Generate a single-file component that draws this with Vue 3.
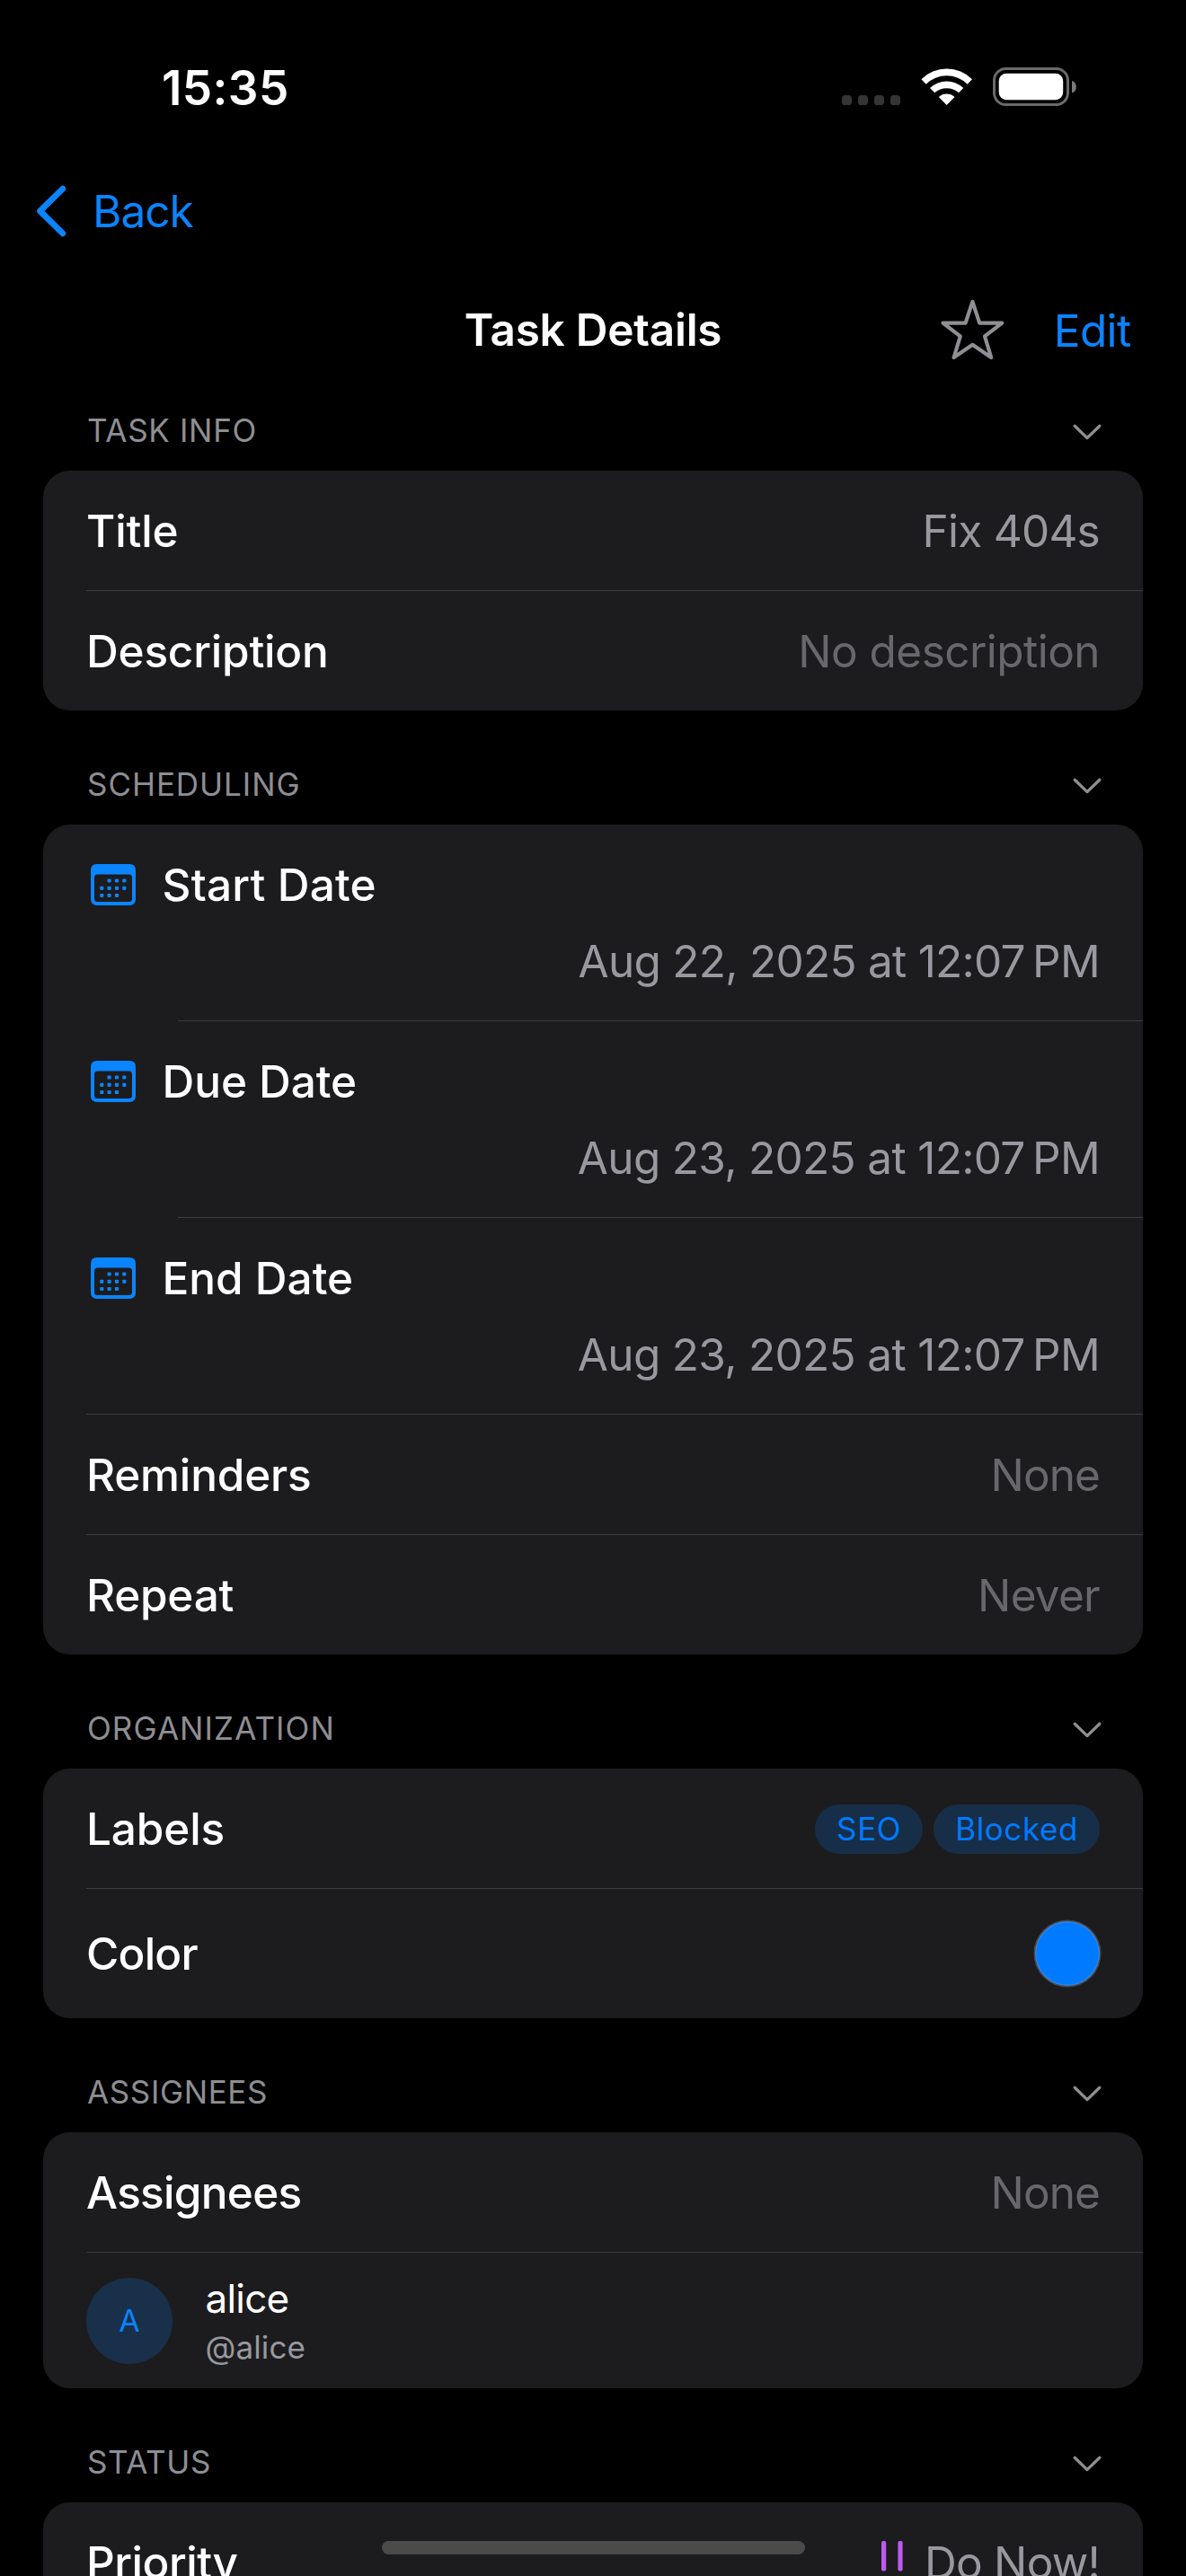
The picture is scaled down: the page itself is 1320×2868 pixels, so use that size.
<script setup>
// `track` is the letter spacing of a text in px, `vt` the one of its value.
const sections = [
  {
    name: 'TASK INFO', track: 0.69,
    rows: [
      { label: 'Title', track: -0.16, value: 'Fix 404s', vt: -0.75 },
      { label: 'Description', track: -0.21, value: 'No description', vt: -0.54, dim: true }
    ]
  },
  {
    name: 'SCHEDULING', track: 0.95,
    rows: [
      { kind: 'date', label: 'Start Date', track: 0.18, value: 'Aug 22, 2025 at 12:07\u202fPM', vt: -0.73, inset: true },
      { kind: 'date', label: 'Due Date', track: -0.05, value: 'Aug 23, 2025 at 12:07\u202fPM', vt: -0.67, inset: true },
      { kind: 'date', label: 'End Date', track: -0.02, value: 'Aug 23, 2025 at 12:07\u202fPM', vt: -0.67 },
      { label: 'Reminders', track: -0.19, value: 'None', vt: -0.9, dim: true },
      { label: 'Repeat', track: -0.25, value: 'Never', vt: -0.72, dim: true }
    ]
  },
  {
    name: 'ORGANIZATION', track: 1.09,
    rows: [
      { kind: 'tags', label: 'Labels', track: -0.15, tags: ['SEO', 'Blocked'] },
      { kind: 'color', label: 'Color', track: -0.77 }
    ]
  },
  {
    name: 'ASSIGNEES', track: 0.62,
    rows: [
      { label: 'Assignees', track: -0.72, value: 'None', vt: -0.9, dim: true },
      { kind: 'person', name: 'alice', handle: '@alice', initial: 'A' }
    ]
  },
  {
    name: 'STATUS', track: 0.62,
    rows: [{ kind: 'priority', label: 'Priority', track: -0.5, value: 'Do Now!', vt: -0.74 }]
  }
]
const dots = [
  [20.6, 18.5], [29, 18.5], [37.3, 18.5],
  [12.3, 26.8], [20.6, 26.8], [29, 26.8], [37.3, 26.8],
  [12.3, 35], [20.6, 35], [29, 35]
]
</script>

<template>
  <main class="screen">
    <header class="status-bar">
      <span class="time">15:35</span>
      <svg class="status-icons" width="261" height="43" viewBox="0 0 261 43">
        <g fill="#353535">
          <rect v-for="i in 4" :key="i" :x="(i - 1) * 18" y="31" width="11" height="11" rx="3.6" />
        </g>
        <g transform="translate(88 0)" fill="#fff">
          <path d="M.4 13.3A40 40 0 0 1 57 13.3L51.7 18.7A33 33 0 0 0 5.7 18.7Z" />
          <path d="M10 23A27 27 0 0 1 47.3 23L42 28.3A20 20 0 0 0 15.3 28.3Z" />
          <path d="M19.8 32.9A13 13 0 0 1 37.5 32.9L28.65 42Z" />
        </g>
        <rect x="169.5" y="1.5" width="82" height="40" rx="13" fill="none" stroke="#6a6a6a" stroke-width="3" />
        <rect x="174.7" y="6.7" width="71.5" height="29.5" rx="8.5" fill="#fff" />
        <path d="M256 15C259.4 16 260.8 18.8 260.8 21.8S259.4 27.6 256 28.6Z" fill="#7a7a7a" />
      </svg>
    </header>

    <nav class="back">
      <svg width="34" height="58" viewBox="0 0 34 58">
        <path d="M29.8 4.2L4.6 29L29.8 53.8" fill="none" stroke="#0a84ff" stroke-width="6.8" stroke-linecap="round" stroke-linejoin="round" />
      </svg>
      <span>Back</span>
    </nav>

    <div class="title-bar">
      <h1>Task Details</h1>
      <div class="actions">
        <svg width="71" height="68" viewBox="0 0 71 68">
          <path d="M35.4 2.8L43.2 26.6L68.3 26.6L49 41.4L56.2 65L35.4 50.8L14.6 65L21.8 41.4L2.5 26.6L27.6 26.6Z" fill="none" stroke="#8e8e93" stroke-width="4.2" stroke-linejoin="round" />
        </svg>
        <span class="edit">Edit</span>
      </div>
    </div>

    <section v-for="s in sections" :key="s.name">
      <div class="section-head">
        <span :style="{ letterSpacing: s.track + 'px' }">{{ s.name }}</span>
        <svg width="32" height="18" viewBox="0 0 32 18">
          <path d="M2.2 2.2L16 15.6L29.8 2.2" fill="none" stroke="#8e8e93" stroke-width="3.3" stroke-linecap="round" stroke-linejoin="round" />
        </svg>
      </div>
      <div class="card">
        <div v-for="(r, i) in s.rows" :key="i" class="row" :class="[r.kind, { inset: r.inset }]">
          <template v-if="r.kind === 'person'">
            <span class="avatar">{{ r.initial }}</span>
            <span class="who">
              <span class="name">{{ r.name }}</span>
              <span class="handle">{{ r.handle }}</span>
            </span>
          </template>
          <template v-else>
            <span class="lead">
              <svg v-if="r.kind === 'date'" class="calendar" width="50" height="46" viewBox="0 0 50 46" fill="#0a84ff">
                <path fill-rule="evenodd" d="M7 0H43Q50 0 50 7V39Q50 46 43 46H7Q0 46 0 39V7Q0 0 7 0ZM7.5 11.5Q4 11.5 4 15V38.5Q4 42 7.5 42H42.5Q46 42 46 38.5V15Q46 11.5 42.5 11.5Z" />
                <rect v-for="(d, k) in dots" :key="k" :x="d[0] - 2.1" :y="d[1] - 2.1" width="4.2" height="4.2" rx="1.1" />
              </svg>
              <span class="label" :style="{ letterSpacing: r.track + 'px' }">{{ r.label }}</span>
            </span>
            <span v-if="r.kind === 'tags'" class="tag-list">
              <span v-for="t in r.tags" :key="t" class="tag">{{ t }}</span>
            </span>
            <svg v-else-if="r.kind === 'color'" class="swatch" width="72" height="72" viewBox="0 0 72 72">
              <circle cx="36" cy="36" r="36" fill="#007aff" />
              <circle cx="36" cy="36" r="36" fill="none" stroke="#98989f" stroke-opacity=".35" stroke-width="3" />
            </svg>
            <span v-else class="trail">
              <svg v-if="r.kind === 'priority'" width="24" height="48" viewBox="0 0 24 48" fill="#bf5af2">
                <rect x="0" y="0" width="5.2" height="33.5" rx="2" />
                <rect x="18.4" y="0" width="5.2" height="33.5" rx="2" />
                <circle cx="2.6" cy="44.5" r="3" />
                <circle cx="21" cy="44.5" r="3" />
              </svg>
              <span class="value" :class="{ dim: r.dim }" :style="{ letterSpacing: r.vt + 'px' }">{{ r.value }}</span>
            </span>
          </template>
        </div>
      </div>
    </section>

    <div class="home-indicator"></div>
  </main>
</template>

<style>
html, body { margin: 0; background: #000; }
</style>

<style scoped>
.screen {
  position: relative;
  width: 1320px;
  height: 2868px;
  overflow: hidden;
  background: #000;
  color: #fff;
  font-family: Inter, "Liberation Sans", sans-serif;
  font-size: 49.5px;
  line-height: 66px;
  white-space: nowrap;
}
svg { display: block; flex: none; overflow: visible; }
.status-bar {
  display: flex;
  align-items: center;
  justify-content: space-between;
  height: 196px;
  padding: 0 122px 0 180px;
  box-sizing: border-box;
}
.status-icons { margin-bottom: 3px; }
.time { font-size: 53px; font-weight: 600; letter-spacing: 0.4px; }
.back {
  display: flex;
  align-items: center;
  gap: 29px;
  height: 78px;
  padding-left: 40px;
  color: #0a84ff;
  letter-spacing: -0.99px;
}
.title-bar {
  display: grid;
  grid-template-columns: 1fr auto 1fr;
  align-items: center;
  height: 186px;
}
h1 {
  grid-column: 2;
  margin: 0;
  font-size: 49.5px;
  font-weight: 600;
  letter-spacing: -0.25px;
}
.actions {
  display: flex;
  align-items: center;
  justify-content: flex-end;
  gap: 55px;
  padding-right: 61.5px;
}
.edit { color: #0a84ff; letter-spacing: -0.65px; padding-top: 2px; }
.section-head {
  display: flex;
  align-items: flex-end;
  justify-content: space-between;
  height: 127px;
  padding: 0 94px 27.5px 97px;
  box-sizing: border-box;
  color: #8e8e93;
  font-size: 35px;
  line-height: 36px;
}
section:first-of-type .section-head { height: 64px; }
.section-head svg { margin-bottom: 7px; }
.card {
  margin: 0 48px;
  border-radius: 30px;
  background: #1c1c1e;
}
.row {
  position: relative;
  display: flex;
  align-items: center;
  justify-content: space-between;
  height: 134px;
  padding: 0 48px;
  box-sizing: border-box;
}
.row:last-child { height: 133px; }
.row:not(:last-child)::after {
  content: "";
  position: absolute;
  left: 48px;
  right: 0;
  bottom: 0;
  height: 1px;
  background: #3d3d40;
}
.row.inset::after { left: 150px; }
.row.date {
  flex-direction: column;
  align-items: stretch;
  height: 219px;
  padding-top: 34px;
  padding-bottom: 34px;
}
.lead, .trail { display: flex; align-items: center; }
.trail { justify-content: flex-end; gap: 24px; }
.calendar { margin: 0 29.5px 0 5px; }
.label { font-weight: 500; }
.value { color: #98989f; }
.value.dim { color: #68686c; }
.tag-list { display: flex; gap: 12px; }
.tag {
  height: 55px;
  padding: 0 24px;
  border-radius: 28px;
  background: #172e48;
  color: #007aff;
  font-size: 35px;
  line-height: 55px;
  letter-spacing: 0.6px;
}
.row.color { height: 144px; }
.row.person { height: 151px; justify-content: flex-start; gap: 36.5px; }
.avatar {
  width: 96px;
  height: 96px;
  border-radius: 50%;
  background: #18304a;
  color: #0a84ff;
  font-size: 34px;
  line-height: 96px;
  text-align: center;
}
.who { display: flex; flex-direction: column; gap: 6px; }
.name { font-size: 44px; line-height: 54px; letter-spacing: -0.79px; }
.handle { font-size: 35px; line-height: 43px; letter-spacing: 0.12px; color: #98989f; }
.row.priority { height: 134px; }
.home-indicator {
  position: absolute;
  left: 425px;
  top: 2829px;
  width: 471px;
  height: 15px;
  border-radius: 8px;
  background: #4b4b4b;
}
</style>
